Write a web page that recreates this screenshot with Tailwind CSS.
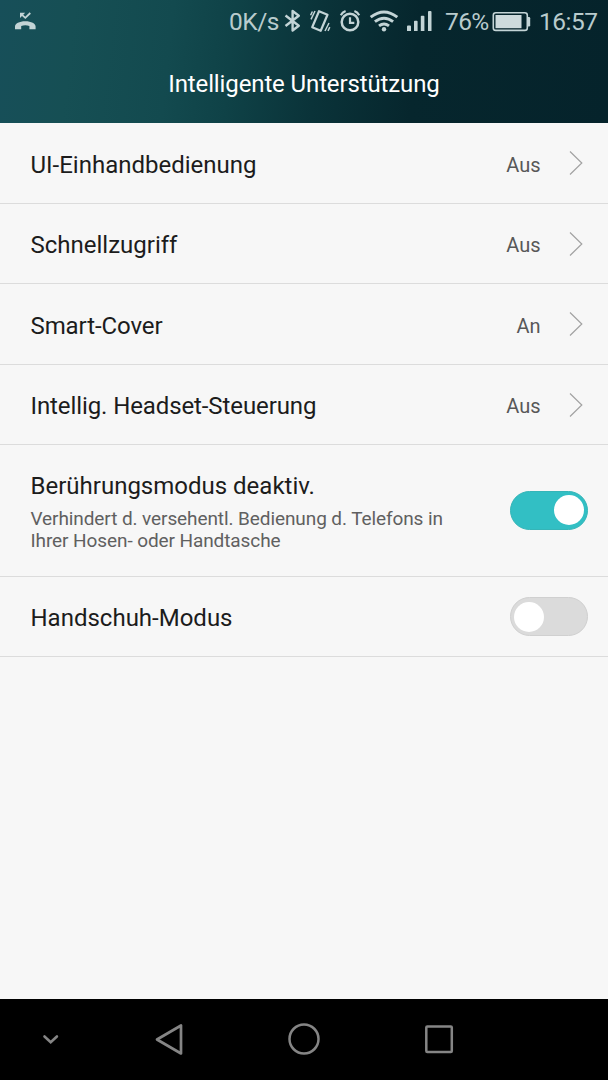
<!DOCTYPE html>
<html lang="de">
<head>
    <meta charset="UTF-8">
    <meta name="viewport" content="width=device-width, initial-scale=1.0">
    <title>Intelligente Unterstützung</title>
    <script src="https://cdn.jsdelivr.net/npm/@tailwindcss/browser@4"></script>
</head>
<body class="h-[1080px] w-[608px] flex flex-col overflow-hidden bg-[#f7f7f7] font-[Roboto,sans-serif] text-[#1c1c1c]">
    <!-- Header -->
    <header class="h-[123px] shrink-0 bg-[linear-gradient(96deg,#174f59_0%,#164f54_12%,#134a4f_28%,#0f4247_38%,#0a3339_52%,#06262d_68%,#05232b_100%)]">
        <div class="h-11 flex items-center text-[24.500px] leading-none text-[#b9cbcd]">
            <svg class="ml-[15px] w-[21px] h-11 text-[#c3d4d6]" viewBox="15 0 21 44" fill="none">
                <path d="M15 29.200v-2.600c0-2.900 4.300-5.300 10.300-5.300s10.300 2.400 10.300 5.300v2.600h-6.200v-3.200c-2.600-.9-5.600-.9-8.200 0v3.200z" fill="currentColor"/>
                <path d="M20 12.800h5.200L20 18z" fill="currentColor"/>
                <path d="M21.500 14.300l3.800 3.500 5-4.800" stroke="currentColor" stroke-width="1.800"/>
            </svg>
            <span class="ml-[193px] w-[51px] pt-px whitespace-nowrap tracking-[-0.500px]">0K/s</span>
            <!-- Bluetooth, vibrate, alarm, wifi, signal -->
            <svg class="w-[156px] h-11 shrink-0 text-[#c3d4d6]" viewBox="280 0 156 44" fill="none" stroke="currentColor" stroke-width="2.400">
                <path d="M285.500 15.500l13.300 10.300-6.200 4.700V11l6.200 4.700-13.300 10.300" stroke-linejoin="round"/>
                <path d="M319 11.200l8.500 3.600-6.800 16-8.500-3.600z" stroke-linejoin="round" stroke-width="2.200"/>
                <path d="M311 19.300l4-8.300M310.600 15.300l1.800-3.800M325 31l4-8M328 30.800l1.800-3.600" stroke-width="1.500"/>
                <circle cx="350" cy="22" r="8.300" stroke-width="2.500"/>
                <path d="M350 17.300v5.500h4.300M340.800 15.200q1.600-3 4.800-4.200M359.200 15.200q-1.600-3-4.800-4.200" stroke-width="2.200"/>
                <path d="M370.700 17.200q13.300-10.600 26.600 0M374.900 21.700q9.100-7.100 18.200 0M379 25.900q5-3.800 10 0" stroke-width="2.900"/>
                <circle cx="384" cy="29.200" r="2.200" fill="currentColor" stroke="none"/>
                <path d="M407 26.500q0-1 1-1h2q1 0 1 1V31h-4zM414 21.500q0-.8.800-.8h2q.8 0 .8.800V31H414zM420.800 16.500q0-.8.800-.8h2q.8 0 .8.800V31h-3.600zM428 12q0-1 1-1h1.500q1 0 1 1v19H428z" fill="currentColor" stroke="none"/>
            </svg>
            <span class="ml-[9px] w-[47px] pt-px whitespace-nowrap tracking-[-0.600px]">76%</span>
            <svg class="w-[39px] h-11 shrink-0 text-[#c3d4d6]" viewBox="492 0 39 44" fill="none">
                <rect x="493.300" y="12.800" width="34" height="17.600" rx="2.500" stroke="currentColor" stroke-width="1.600"/>
                <rect x="495.500" y="15" width="26" height="13.200" fill="#cddadc"/>
                <path d="M528 17h1q1.200 0 1.200 1.200v7q0 1.200-1.200 1.200h-1z" fill="currentColor"/>
            </svg>
            <span class="ml-2 pt-px whitespace-nowrap tracking-[-0.500px]">16:57</span>
        </div>
        <h1 class="h-20 flex items-center justify-center text-[24px] tracking-[-0.12px] text-white">Intelligente Unterstützung</h1>
    </header>

    <!-- Settings list -->
    <main class="flex-1 flex flex-col text-[24px]">
        <div class="h-[81px] flex items-center pl-[30.500px] pr-[25px] pt-[3px] border-b border-[#dcdcdc]">
            <span class="flex-1">UI-Einhandbedienung</span>
            <span class="text-[20px] text-[#585858]">Aus</span>
            <svg class="ml-[28.500px] w-[14px] h-6 mb-[3px]" viewBox="0 0 14 24" fill="none" stroke="#a2a2a2" stroke-width="1.200"><path d="M1 .5L12.800 12 1 23.500"/></svg>
        </div>
        <div class="h-20 flex items-center pl-[30.500px] pr-[25px] pt-0.5 border-b border-[#dcdcdc]">
            <span class="flex-1">Schnellzugriff</span>
            <span class="text-[20px] text-[#585858]">Aus</span>
            <svg class="ml-[28.500px] w-[14px] h-6 mb-0.5" viewBox="0 0 14 24" fill="none" stroke="#a2a2a2" stroke-width="1.200"><path d="M1 .5L12.800 12 1 23.500"/></svg>
        </div>
        <div class="h-[81px] flex items-center pl-[30.500px] pr-[25px] pt-[3px] border-b border-[#dcdcdc]">
            <span class="flex-1 tracking-[-0.1px]">Smart-Cover</span>
            <span class="text-[20px] text-[#585858]">An</span>
            <svg class="ml-[28.500px] w-[14px] h-6 mb-[3px]" viewBox="0 0 14 24" fill="none" stroke="#a2a2a2" stroke-width="1.200"><path d="M1 .5L12.800 12 1 23.500"/></svg>
        </div>
        <div class="h-20 flex items-center pl-[30.500px] pr-[25px] pt-0.5 border-b border-[#dcdcdc]">
            <span class="flex-1 tracking-[-0.1px]">Intellig. Headset-Steuerung</span>
            <span class="text-[20px] text-[#585858]">Aus</span>
            <svg class="ml-[28.500px] w-[14px] h-6 mb-0.5" viewBox="0 0 14 24" fill="none" stroke="#a2a2a2" stroke-width="1.200"><path d="M1 .5L12.800 12 1 23.500"/></svg>
        </div>
        <div class="h-[132px] flex items-center justify-between pl-[30.500px] pr-5 border-b border-[#dcdcdc]">
            <div class="pb-0.5">
                <div class="leading-9">Berührungsmodus deaktiv.</div>
                <p class="mt-1 text-[19px] leading-[22px] tracking-[-0.09px] text-[#606060]">Verhindert d. versehentl. Bedienung d. Telefons in<br>Ihrer Hosen- oder Handtasche</p>
            </div>
            <div class="w-[78px] h-[39px] flex items-center justify-end rounded-full bg-[#32bfc4] border border-[#35b5b8] pr-[3px] mb-px">
                <div class="size-[30px] rounded-full bg-white"></div>
            </div>
        </div>
        <div class="h-20 flex items-center justify-between pl-[30.500px] pr-5 border-b border-[#dcdcdc]">
            <span class="pt-[3px]">Handschuh-Modus</span>
            <div class="w-[78px] h-[39px] flex items-center rounded-full bg-[#dbdbdb] border border-[#d0d0d0] pl-[3px]">
                <div class="size-[30px] rounded-full bg-white"></div>
            </div>
        </div>
    </main>

    <!-- Navigation bar -->
    <nav class="h-[81px] shrink-0 flex items-center pb-px bg-black text-[#858585]">
        <svg class="ml-[42px] w-[17px] h-10" viewBox="0 0 17 40" fill="none" stroke="currentColor" stroke-width="2.600" stroke-linecap="round"><path d="M2.500 17.500l6.200 5.700 6.200-5.700"/></svg>
        <svg class="ml-[95px] w-[30px] h-8" viewBox="0 0 30 32" fill="none" stroke="currentColor" stroke-width="2.700" stroke-linejoin="round"><path d="M27 2.500v28L3 16.500z"/></svg>
        <svg class="ml-[104px] size-8" viewBox="0 0 32 32" fill="none" stroke="currentColor" stroke-width="2.500"><circle cx="16" cy="16" r="14.500"/></svg>
        <svg class="ml-[104px] w-[30px] h-8" viewBox="0 0 30 32" fill="none" stroke="currentColor" stroke-width="2.500"><rect x="2.300" y="3.500" width="25.500" height="25.500" rx="1"/></svg>
    </nav>
</body>
</html>
